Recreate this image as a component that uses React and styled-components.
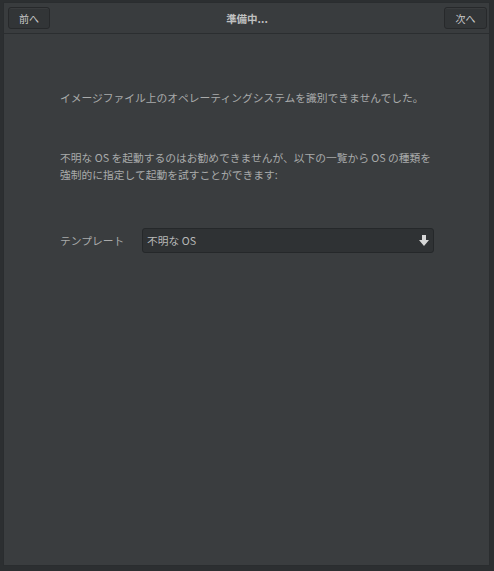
import React from "react";
import styled, { createGlobalStyle } from "styled-components";

const GlobalStyle = createGlobalStyle`
  html, body {
    margin: 0;
    padding: 0;
    background: #2c2f31;
  }
  body {
    font-family: "Noto Sans CJK JP", "Noto Sans", sans-serif;
  }
`;

const Frame = styled.div`
  width: 494px;
  height: 571px;
  box-sizing: border-box;
  padding: 2px 4px 5px 3px;
  background: #2c2f31;
`;

const Window = styled.div`
  height: 100%;
  box-sizing: border-box;
  display: flex;
  flex-direction: column;
  background: #3a3d3f;
  border: 1px solid #2a2d2f;
`;

const HeaderBar = styled.div`
  height: 31px;
  box-sizing: border-box;
  display: flex;
  align-items: center;
  justify-content: space-between;
  padding: 0 2px 0 4px;
  background: #393c3e;
  border-bottom: 1px solid #2b2e30;
`;

const NavButton = styled.div`
  height: 22px;
  width: ${(p) => p.$w}px;
  box-sizing: border-box;
  display: flex;
  align-items: center;
  justify-content: center;
  font-size: 10px;
  color: #c8c9c9;
  background: #323537;
  border: 1px solid #27292b;
  border-radius: 3px;
  box-shadow: inset 0 1px rgba(255, 255, 255, 0.04);
`;

const Title = styled.div`
  font-size: 10.5px;
  font-weight: 700;
  color: #c0c1c1;
`;

const Body = styled.div`
  flex: 1;
  display: flex;
  flex-direction: column;
  padding: 55px 56px 0 56px;
  color: #a9abab;
  font-size: 10.75px;
  line-height: 17px;
`;

const Para = styled.p`
  margin: 0 0 ${(p) => p.$gap}px 0;
  white-space: nowrap;
`;

const Row = styled.div`
  display: flex;
  align-items: center;
  gap: 16px;
  margin-top: 2px;
`;

const Label = styled.span`
  width: 66px;
`;

const Combo = styled.div`
  flex: 1;
  height: 25px;
  margin-right: -1px;
  box-sizing: border-box;
  display: flex;
  align-items: center;
  justify-content: space-between;
  padding: 0 4px 0 4px;
  background: #2f3234;
  border: 1px solid #25282a;
  border-radius: 3px;
  color: #b8b9b9;
`;

const Arrow = () => (
  <svg width="10" height="11" viewBox="0 0 10 11">
    <path d="M3 0h4v5h3l-5 6-5-6h3z" fill="#d6d7d7" />
  </svg>
);

export default function App() {
  return (
    <>
      <GlobalStyle />
      <Frame>
        <Window>
          <HeaderBar>
            <NavButton $w={42}>前へ</NavButton>
            <Title>準備中...</Title>
            <NavButton $w={43}>次へ</NavButton>
          </HeaderBar>
          <Body>
            <Para $gap={43}>
              イメージファイル上のオペレーティングシステムを識別できませんでした。
            </Para>
            <Para $gap={43}>
              不明な OS を起動するのはお勧めできませんが、以下の一覧から OS の種類を
              <br />
              強制的に指定して起動を試すことができます:
            </Para>
            <Row>
              <Label>テンプレート</Label>
              <Combo>
                <span>不明な OS</span>
                <Arrow />
              </Combo>
            </Row>
          </Body>
        </Window>
      </Frame>
    </>
  );
}
